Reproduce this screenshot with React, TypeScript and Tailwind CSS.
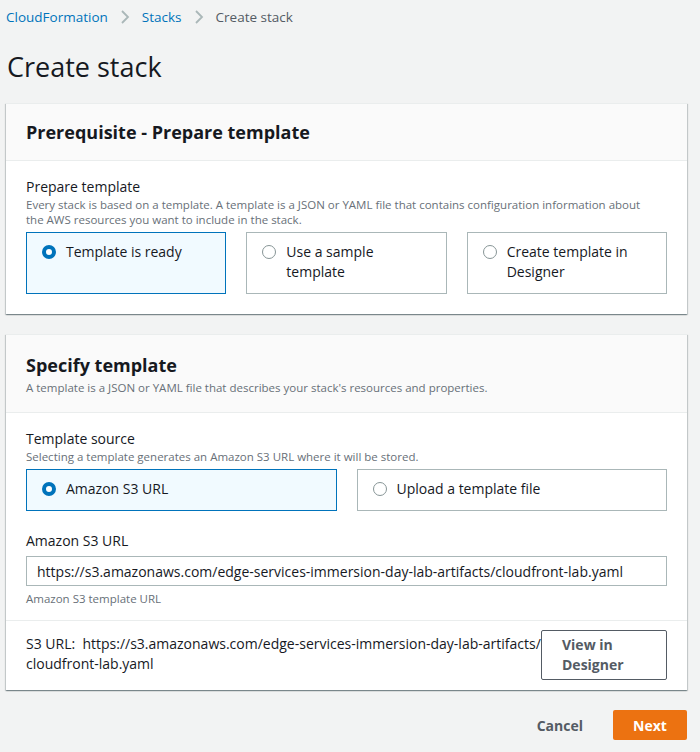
import React, { useState } from 'react';

const font = { fontFamily: '"Open Sans", "Liberation Sans", Arial, sans-serif' };

interface RadioCardProps {
  label: string;
  selected: boolean;
  onSelect: () => void;
  tall?: boolean;
}

const RadioCard: React.FC<RadioCardProps> = ({ label, selected, onSelect, tall }) => (
  <button
    type="button"
    onClick={onSelect}
    className={`flex items-start gap-[10px] border px-[15px] pt-[9px] text-left text-[14px] leading-[20px] text-[#16191f] ${
      tall ? 'h-[62px]' : 'h-[42px]'
    } ${selected ? 'border-[#0073bb] bg-[#f1faff]' : 'border-[#aab7b8] bg-white'}`}
  >
    <span
      className={`mt-[3px] h-[14px] w-[14px] shrink-0 rounded-full ${
        selected ? 'border-[4px] border-[#0073bb] bg-white' : 'border border-[#879596] bg-white'
      }`}
    />
    <span>{label}</span>
  </button>
);

const Chevron = () => (
  <svg width="10" height="16" viewBox="0 0 10 16" className="mx-[12px]">
    <path d="M2 2l6 6-6 6" fill="none" stroke="#aab7b8" strokeWidth="1.8" />
  </svg>
);

export default function App() {
  const [prep, setPrep] = useState(0);
  const [source, setSource] = useState(0);
  const url = 'https://s3.amazonaws.com/edge-services-immersion-day-lab-artifacts/cloudfront-lab.yaml';

  return (
    <div className="min-h-[752px] bg-[#f2f3f3] pl-[6px] pr-[13px] pb-[12px] text-[#16191f]" style={font}>
      <nav className="flex h-[34px] items-center text-[13.5px]">
        <a className="text-[#0073bb]">CloudFormation</a>
        <Chevron />
        <a className="text-[#0073bb]">Stacks</a>
        <Chevron />
        <span className="text-[#545b64]">Create stack</span>
      </nav>

      <h1 className="mt-[15px] mb-[18px] pl-[1px] text-[27px] leading-[36px] font-normal">Create stack</h1>

      <section className="border-t border-[#eaeded] bg-white shadow-[0_1px_1px_0_rgba(0,28,36,0.3),1px_1px_1px_0_rgba(0,28,36,0.15),-1px_1px_1px_0_rgba(0,28,36,0.15)]">
        <div className="flex h-[57px] items-center border-b border-[#eaeded] bg-[#fafafa] px-[20px]">
          <h2 className="text-[18px] font-bold leading-[24px]">Prerequisite - Prepare template</h2>
        </div>
        <div className="px-[20px] pt-[16px] pb-[20px]">
          <div className="text-[14px] leading-[20px]">Prepare template</div>
          <p className="text-[11.5px] leading-[15px] text-[#687078]">
            Every stack is based on a template. A template is a JSON or YAML file that contains configuration information about
            <br />
            the AWS resources you want to include in the stack.
          </p>
          <div className="mt-[5px] grid grid-cols-3 gap-[20px]">
            {['Template is ready', 'Use a sample template', 'Create template in Designer'].map((l, i) => (
              <RadioCard key={l} label={l} selected={prep === i} onSelect={() => setPrep(i)} tall />
            ))}
          </div>
        </div>
      </section>

      <section className="mt-[20px] border-t border-[#eaeded] bg-white shadow-[0_1px_1px_0_rgba(0,28,36,0.3),1px_1px_1px_0_rgba(0,28,36,0.15),-1px_1px_1px_0_rgba(0,28,36,0.15)]">
        <div className="border-b border-[#eaeded] bg-[#fafafa] px-[20px] pt-[18px] pb-[17px]">
          <h2 className="text-[18px] font-bold leading-[24px]">Specify template</h2>
          <p className="mt-[3px] text-[11.5px] leading-[15px] text-[#687078]">
            A template is a JSON or YAML file that describes your stack's resources and properties.
          </p>
        </div>
        <div className="px-[20px] pt-[16px] pb-[14px]">
          <div className="text-[14px] leading-[20px]">Template source</div>
          <p className="text-[11.5px] leading-[15px] text-[#687078]">
            Selecting a template generates an Amazon S3 URL where it will be stored.
          </p>
          <div className="mt-[5px] grid grid-cols-2 gap-[20px]">
            {['Amazon S3 URL', 'Upload a template file'].map((l, i) => (
              <RadioCard key={l} label={l} selected={source === i} onSelect={() => setSource(i)} />
            ))}
          </div>

          <div className="mt-[20px] text-[14px] leading-[20px]">Amazon S3 URL</div>
          <input
            readOnly
            value={url}
            className="mt-[5px] h-[30px] w-full border border-[#aab7b8] bg-white px-[10px] text-[14px] text-[#16191f] outline-none"
            style={font}
          />
          <p className="mt-[5px] text-[11.5px] leading-[15px] text-[#687078]">Amazon S3 template URL</p>
        </div>
        <div className="flex items-start justify-between border-t border-[#eaeded] px-[20px] pt-[9px] pb-[10px]">
          <p className="pt-[4px] text-[14px] leading-[20px]">
            S3 URL:&nbsp; https://s3.amazonaws.com/edge-services-immersion-day-lab-artifacts/
            <br />
            cloudfront-lab.yaml
          </p>
          <button
            type="button"
            className="h-[50px] w-[126px] shrink-0 rounded-[2px] border border-[#545b64] px-[20px] text-left text-[14px] font-bold leading-[20px] text-[#545b64]"
          >
            View in Designer
          </button>
        </div>
      </section>

      <div className="mt-[20px] flex items-center justify-end gap-[30px]">
        <button type="button" className="text-[14px] font-bold text-[#545b64]">
          Cancel
        </button>
        <button
          type="button"
          className="h-[30px] w-[74px] rounded-[2px] bg-[#ec7211] text-[14px] font-bold text-white"
        >
          Next
        </button>
      </div>
    </div>
  );
}
